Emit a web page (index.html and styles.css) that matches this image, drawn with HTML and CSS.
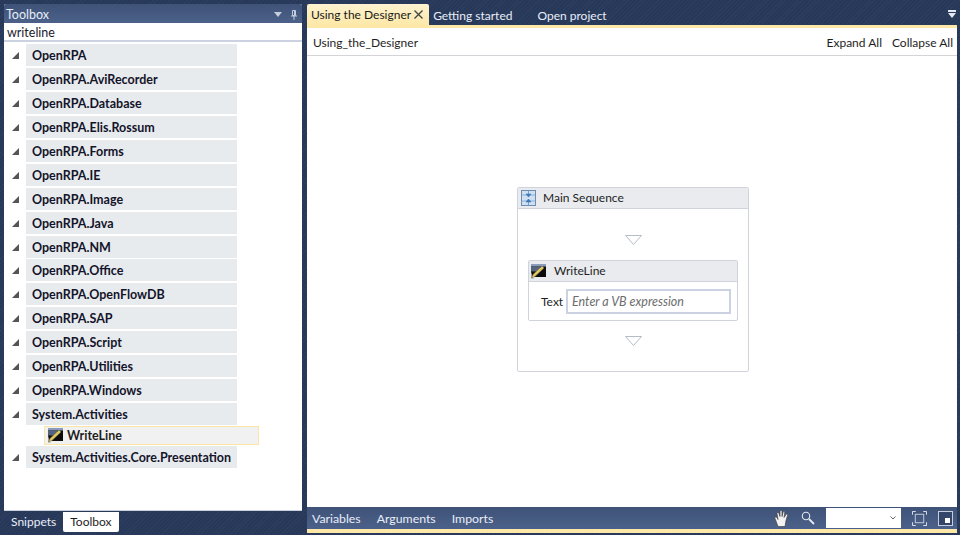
FILE: index.html
```html
<!DOCTYPE html>
<html lang="en">
<head>
  <meta charset="UTF-8" />
  <title>OpenRPA</title>
  <link rel="stylesheet" href="styles.css">
</head>
<body>

  <div class="left">
    <div class="panel">
      <div class="panel-title">
        <span>Toolbox</span>
        <span class="panel-icons">
          <svg width="8" height="5" viewBox="0 0 8 5"><path d="M0 0h8L4 5z" fill="#c5ccdc"/></svg>
          <svg width="6" height="10" viewBox="0 0 6 10"><path d="M1.500.5h3v5h-3zM0 6h6M3 6v4M3.500 1v4" fill="none" stroke="#c5ccdc"/></svg>
        </span>
      </div>
      <div class="search">writeline</div>
      <div class="tree">
        <div class="group"><i class="arrow"></i><b>OpenRPA</b></div>
        <div class="group"><i class="arrow"></i><b>OpenRPA.AviRecorder</b></div>
        <div class="group"><i class="arrow"></i><b>OpenRPA.Database</b></div>
        <div class="group"><i class="arrow"></i><b>OpenRPA.Elis.Rossum</b></div>
        <div class="group"><i class="arrow"></i><b>OpenRPA.Forms</b></div>
        <div class="group"><i class="arrow"></i><b>OpenRPA.IE</b></div>
        <div class="group"><i class="arrow"></i><b>OpenRPA.Image</b></div>
        <div class="group"><i class="arrow"></i><b>OpenRPA.Java</b></div>
        <div class="group"><i class="arrow"></i><b>OpenRPA.NM</b></div>
        <div class="group"><i class="arrow"></i><b>OpenRPA.Office</b></div>
        <div class="group"><i class="arrow"></i><b>OpenRPA.OpenFlowDB</b></div>
        <div class="group"><i class="arrow"></i><b>OpenRPA.SAP</b></div>
        <div class="group"><i class="arrow"></i><b>OpenRPA.Script</b></div>
        <div class="group"><i class="arrow"></i><b>OpenRPA.Utilities</b></div>
        <div class="group"><i class="arrow"></i><b>OpenRPA.Windows</b></div>
        <div class="group"><i class="arrow"></i><b>System.Activities</b></div>
        <div class="tool">
          <svg class="wl-icon" width="16" height="15" viewBox="0 0 16 15">
            <rect x="1" y="0" width="15" height="13" fill="#0c0c0c"/>
            <path d="M1 0h15v2.500H1z" fill="#8a9cba"/>
            <path d="M1 2.500h9v5H1z" fill="#55647e"/>
            <path d="M1 7.500v7h3l-1.500-2z" fill="#a8a8a8"/>
            <path d="M1.500 14l1.500-3.500 9-8.500 2 2-9 8.500z" fill="#e3c860" stroke="#6b6b50" stroke-width=".5"/>
          </svg>
          <b>WriteLine</b>
        </div>
        <div class="group"><i class="arrow"></i><b>System.Activities.Core.Presentation</b></div>
      </div>
    </div>
    <div class="bottom-tabs">
      <span class="btab">Snippets</span>
      <span class="btab active">Toolbox</span>
    </div>
  </div>

  <div class="right">
    <div class="tabs">
      <span class="tab active">Using the Designer
        <svg width="9" height="9" viewBox="0 0 9 9"><path d="M.5.500l8 8M8.500.500l-8 8" stroke="#444" stroke-width="1.300"/></svg>
      </span>
      <span class="tab">Getting started</span>
      <span class="tab open">Open project</span>
      <svg class="tabs-menu" width="8" height="8" viewBox="0 0 8 8"><path d="M0 0h8v2H0zM0 3h8L4 8z" fill="#e4e8f0"/></svg>
    </div>

    <div class="doc">
      <div class="doc-head">
        <span>Using_the_Designer</span>
        <span class="doc-links"><span>Expand All</span><span>Collapse All</span></span>
      </div>
      <div class="canvas">
        <div class="sequence">
          <div class="act-head">
            <svg width="15" height="16" viewBox="0 0 15 16">
              <rect x=".5" y=".5" width="14" height="15" fill="#cfe0f2" stroke="#6f8db0"/>
              <path d="M1 5h13M1 11h13" stroke="#8fb0d0"/>
              <path d="M7.500 1v5M5 4l2.500 3L10 4zM7.500 15v-5M5 12l2.500-3 2.500 3z" fill="#3a78b8" stroke="#3a78b8" stroke-width=".6"/>
            </svg>
            <span>Main Sequence</span>
          </div>
          <div class="seq-body">
            <svg class="drop" width="17" height="10" viewBox="0 0 17 10"><path d="M.5.500h16l-8 9z" fill="#fff" stroke="#b4bcc8"/></svg>
            <div class="writeline">
              <div class="act-head small">
                <svg width="16" height="15" viewBox="0 0 16 15">
                  <rect x="1" y="0" width="15" height="13" fill="#0c0c0c"/>
                  <path d="M1 0h15v2.500H1z" fill="#8a9cba"/>
                  <path d="M1 2.500h9v5H1z" fill="#55647e"/>
                  <path d="M1 7.500v7h3l-1.500-2z" fill="#a8a8a8"/>
                  <path d="M1.500 14l1.500-3.500 9-8.500 2 2-9 8.500z" fill="#e3c860" stroke="#6b6b50" stroke-width=".5"/>
                </svg>
                <span>WriteLine</span>
              </div>
              <div class="act-row">
                <span>Text</span>
                <div class="vb-input">Enter a VB expression</div>
              </div>
            </div>
            <svg class="drop" width="17" height="10" viewBox="0 0 17 10"><path d="M.5.500h16l-8 9z" fill="#fff" stroke="#b4bcc8"/></svg>
          </div>
        </div>
      </div>
    </div>

    <div class="statusbar">
      <span>Variables</span>
      <span>Arguments</span>
      <span>Imports</span>
      <div class="status-tools">
        <svg width="16" height="19" viewBox="0 0 16 18"><path d="M4 17 1 9c-.5-1.500 1-2 2-1l1 2-1-6c0-1.500 1.500-1.500 2 0l1 3V2c0-1.500 2-1.500 2 0v5l1-4c.5-1.500 2-1 1.800.5L10 8l2-3c1-1 2-.3 1.500 1L12 11l-1 6z" fill="#f2f2f2" stroke="#444" stroke-width=".7"/></svg>
        <svg class="zoom" width="14" height="14" viewBox="0 0 14 14"><circle cx="5" cy="5" r="3.700" fill="none" stroke="#e6eaf2" stroke-width="1.100"/><path d="M8 8l5 5" stroke="#e6eaf2" stroke-width="1.800"/></svg>
        <div class="zoom-box"><svg width="6" height="4" viewBox="0 0 6 4"><path d="M.5.500 3 3 5.500.500" fill="none" stroke="#666"/></svg></div>
        <svg class="fit" width="15" height="15" viewBox="0 0 16 16"><path d="M.5 4V.5H4M12 .5h3.500V4M15.500 12v3.500H12M4 15.500H.5V12" fill="none" stroke="#e6eaf2"/><rect x="3.500" y="3.500" width="9" height="9" fill="none" stroke="#c6cede"/></svg>
        <svg class="fit" width="15" height="15" viewBox="0 0 15 15"><rect x=".5" y=".5" width="14" height="14" fill="#33466a" stroke="#c6cede"/><rect x="7" y="7" width="5" height="5" fill="#fff"/></svg>
      </div>
    </div>
  </div>

</body>
</html>
```

FILE: styles.css
```css
html, body {
  height: 100%;
}

body {
  margin: 0;
  height: 535px;
  overflow: hidden;
  box-sizing: border-box;
  padding: 4px 3px 2px 4px;
  display: flex;
  gap: 5px;
  font-family: "Lato", "Open Sans", sans-serif;
  font-size: 12px;
  color: #1e1e1e;
  background-color: #293a5a;
  background-image: repeating-linear-gradient(135deg, #2c3e60 0 1px, #283858 1px 3px);
}

.left {
  width: 298px;
  display: flex;
  flex-direction: column;
}

.panel {
  height: 507px;
  display: flex;
  flex-direction: column;
  background: #fff;
  border-radius: 2px 2px 0 0;
  border-bottom: 1px solid #c9d0de;
  box-sizing: border-box;
}

.panel-title {
  height: 19px;
  box-sizing: border-box;
  padding: 2px 5px 0 2px;
  display: flex;
  justify-content: space-between;
  align-items: center;
  font-size: 12.500px;
  color: #e8eef8;
  background: linear-gradient(#3f5379, #4c6189);
  border-radius: 2px 2px 0 0;
}

.panel-icons {
  display: flex;
  align-items: center;
  gap: 9px;
}

.search {
  height: 17px;
  line-height: 19px;
  padding-left: 3px;
  font-size: 12.500px;
  border-bottom: 2px solid #ccd2e2;
  color: #1a1a2e;
}

.tree {
  flex: 1;
  padding-top: 2.400px;
}

.group {
  height: 22px;
  margin: 0 0 1.900px 22px;
  width: 211px;
  display: flex;
  align-items: center;
  position: relative;
  padding: 1px 0 0 6px;
  box-sizing: border-box;
  font-size: 12.500px;
  background: #e8ebee;
}

.group b {
  font-weight: 700;
  color: #14142a;
}

.arrow {
  position: absolute;
  left: -14px;
  top: 8px;
  width: 0;
  height: 0;
  border-style: solid;
  border-width: 0 0 7px 7px;
  border-color: transparent transparent #555 transparent;
}

.tool {
  height: 19px;
  width: 215px;
  margin: -1px 0 1.500px 40px;
  display: flex;
  align-items: center;
  gap: 4px;
  padding-left: 2px;
  box-sizing: border-box;
  font-size: 12.500px;
  background: #f1f1f1;
  border: 1px solid #fde6a3;
}

.bottom-tabs {
  display: flex;
  padding-top: 1px;
}

.btab {
  height: 20px;
  line-height: 19px;
  padding: 0 7px;
  color: #e8eef8;
}

.btab.active {
  background: #fff;
  color: #1e1e1e;
  border-radius: 0 0 2px 2px;
}

.right {
  flex: 1;
  display: flex;
  flex-direction: column;
}

.tabs {
  height: 21px;
  flex: none;
  display: flex;
  align-items: stretch;
  position: relative;
}

.tab {
  padding: 0 4px;
  line-height: 23px;
  color: #e8eef8;
  white-space: nowrap;
}

.tab.active {
  color: #1a1a1a;
  background: linear-gradient(#fdf3d0, #fde8a8);
  border-radius: 2px 2px 0 0;
  display: flex;
  align-items: center;
  gap: 3px;
  padding-right: 6px;
}

.tab.open {
  margin-left: 17px;
}

.tabs-menu {
  position: absolute;
  right: 1px;
  top: 6px;
}

.doc {
  flex: 1;
  display: flex;
  flex-direction: column;
  background: #fff;
  border-top: 3px solid #fde8a8;
}

.doc-head {
  height: 28px;
  flex: none;
  box-sizing: border-box;
  padding: 2px 4px 0 6px;
  display: flex;
  justify-content: space-between;
  align-items: center;
  border-bottom: 1px solid #d4d4d8;
}

.doc-links {
  display: flex;
  gap: 10px;
}

.canvas {
  flex: 1;
  display: flex;
  align-items: flex-start;
  justify-content: center;
  padding: 131px 0 0 2px;
}

.sequence {
  width: 232px;
  height: 185px;
  box-sizing: border-box;
  border: 1px solid #d0d4da;
  border-radius: 2px;
}

.act-head {
  height: 20px;
  display: flex;
  align-items: center;
  gap: 7px;
  padding-left: 3px;
  background: #e9ebee;
  border-bottom: 1px solid #d0d4da;
}

.act-head span {
  padding-bottom: 2px;
}

.act-head.small {
  gap: 8px;
  padding-left: 1px;
}

.seq-body {
  display: flex;
  flex-direction: column;
  align-items: center;
}

.drop {
  margin: 26px 0 15px;
}

.writeline + .drop {
  margin-top: 15px;
}

.writeline {
  width: 210px;
  box-sizing: border-box;
  border: 1px solid #d0d4da;
  border-radius: 2px;
}

.act-row {
  height: 38px;
  display: flex;
  align-items: center;
  justify-content: space-between;
  padding: 0 6px 0 12px;
}

.vb-input {
  width: 165px;
  height: 25px;
  line-height: 21px;
  box-sizing: border-box;
  padding-left: 4px;
  border: 2px solid #ccd2e2;
  font-size: 12.500px;
  font-style: italic;
  color: #6d6d6d;
}

.statusbar {
  height: 26px;
  flex: none;
  box-sizing: border-box;
  display: flex;
  align-items: center;
  gap: 16px;
  padding: 0 4px 0 5px;
  font-size: 12.300px;
  color: #e8eef8;
  background: linear-gradient(#3f5379, #4c6189);
  border-bottom: 4px solid #fde8a8;
}

.status-tools {
  margin-left: auto;
  display: flex;
  align-items: center;
}

.zoom {
  margin-left: 11px;
}

.zoom-box {
  width: 75px;
  height: 20px;
  margin: 0 11px;
  box-sizing: border-box;
  padding: 0 5px 0 0;
  display: flex;
  align-items: center;
  justify-content: flex-end;
  background: #fff;
}

.fit + .fit {
  margin-left: 11px;
}
```
